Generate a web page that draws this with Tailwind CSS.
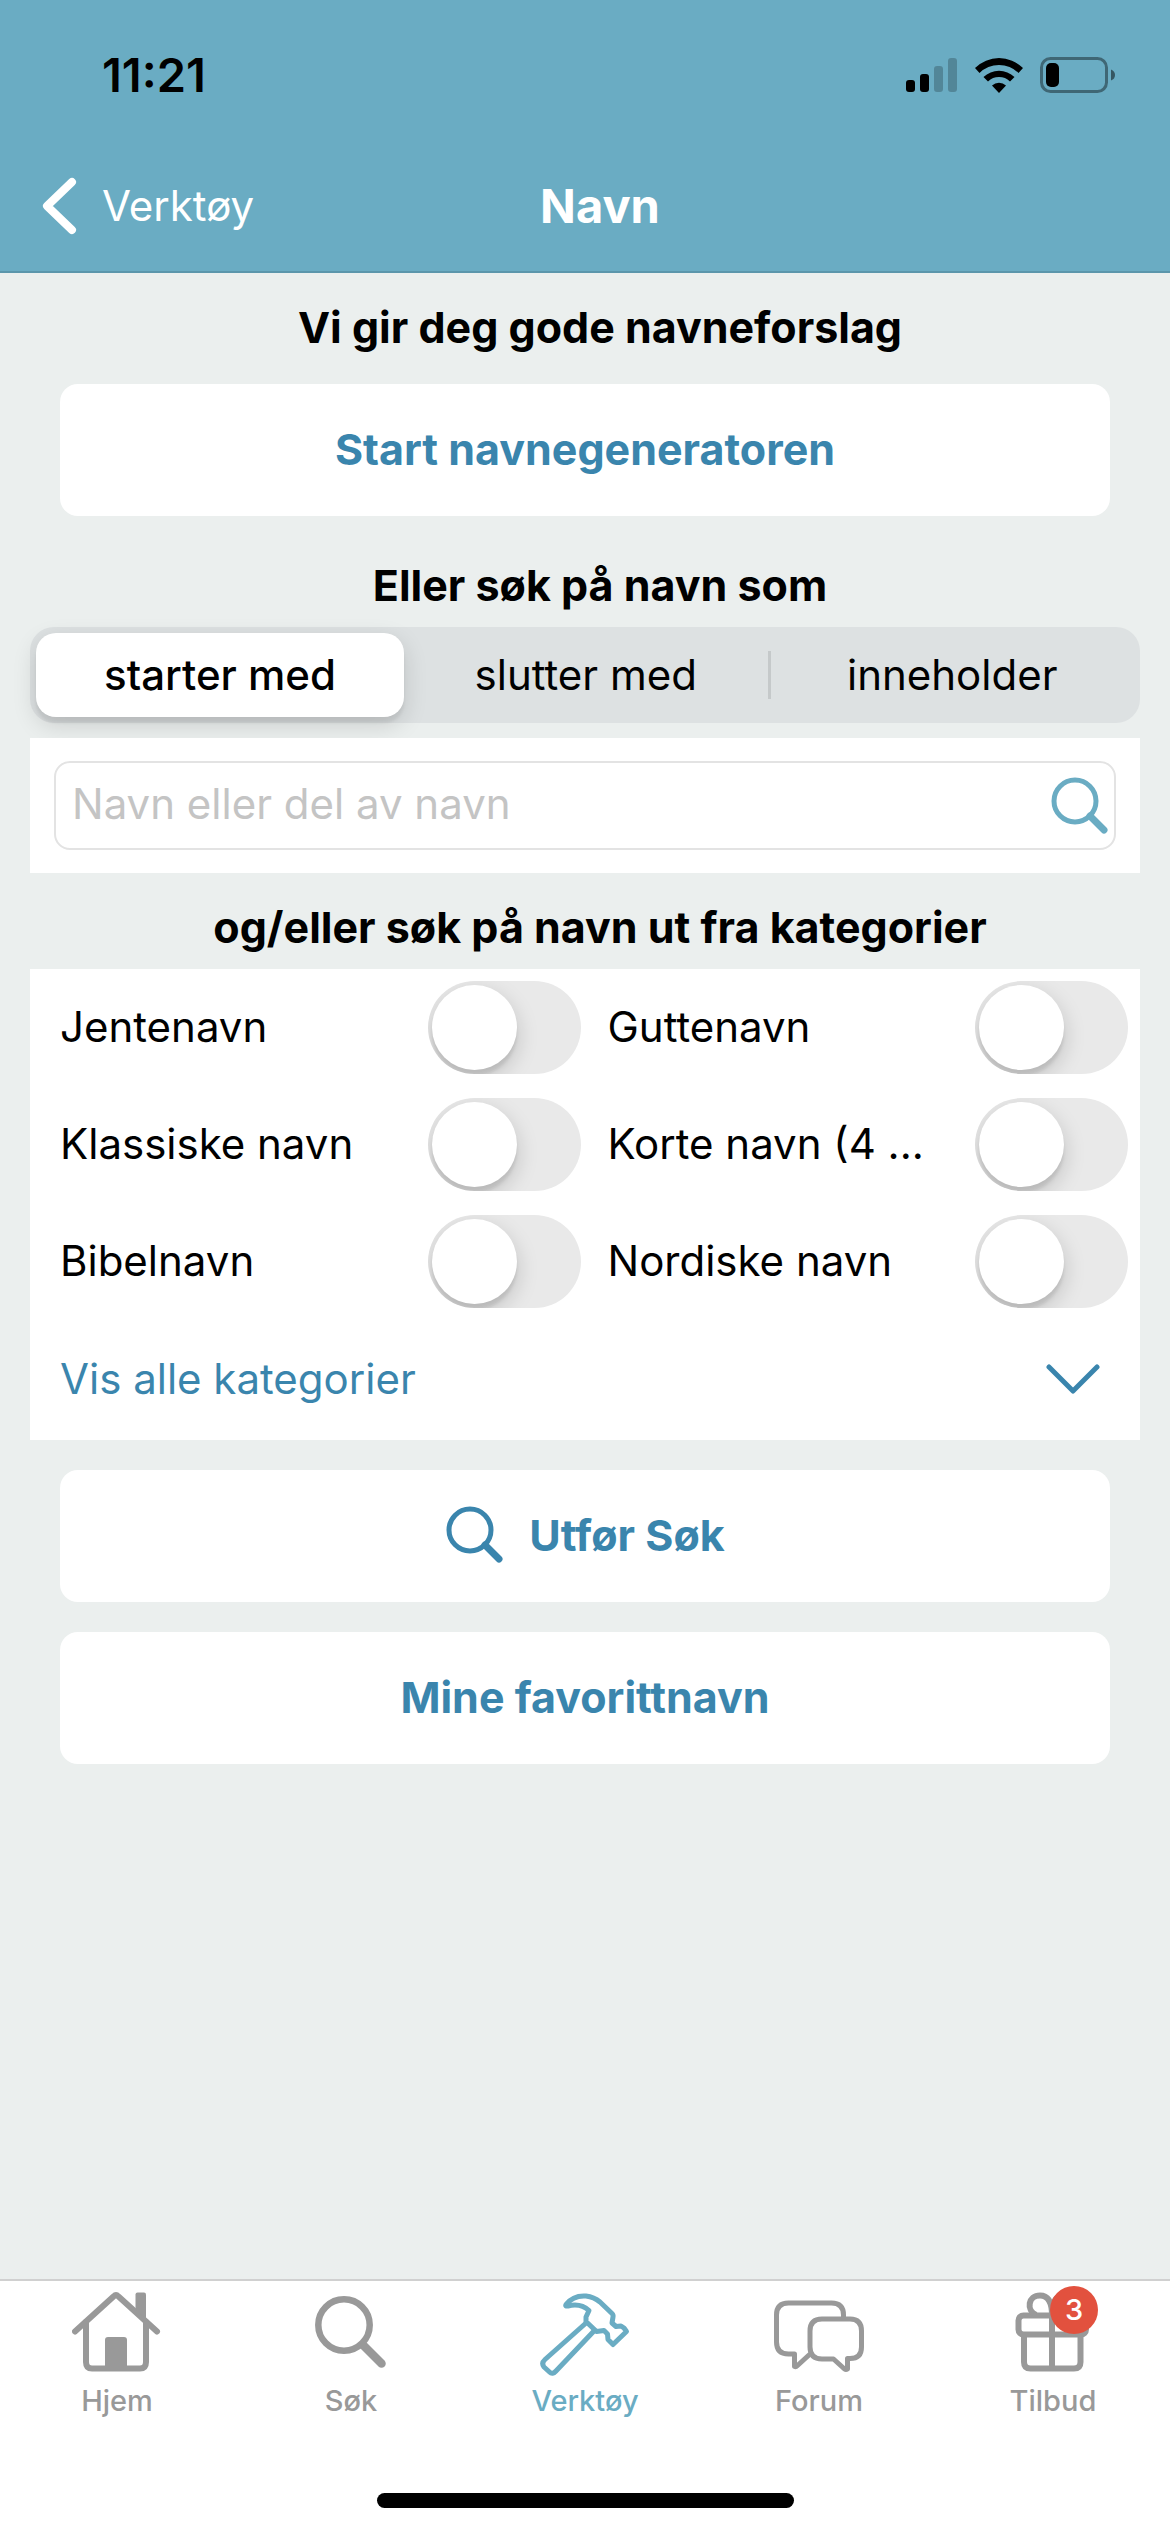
<!DOCTYPE html>
<html lang="nb">
<head>
    <meta charset="UTF-8">
    <meta name="viewport" content="width=device-width, initial-scale=1.0">
    <title>Navn</title>
    <script src="https://cdn.jsdelivr.net/npm/@tailwindcss/browser@4"></script>
</head>
<body class="min-h-screen flex flex-col bg-[#ebefee] text-black font-['Inter',sans-serif] text-[42px] leading-[52px]">

    <header class="bg-[#6aacc3] border-b-2 border-[#5b96ab] text-white">
        <!-- Status bar -->
        <div class="h-[141px] flex items-center justify-between pt-2 pl-[102px] pr-[54px] text-black">
            <span class="text-[47px] font-semibold">11:21</span>
            <div class="flex items-center gap-4">
                <svg class="w-[52px] h-9" viewBox="0 0 52 36">
                    <rect x="0" y="23" width="9" height="12" rx="3"/>
                    <rect x="14" y="17" width="9" height="18" rx="3"/>
                    <rect x="28" y="9" width="9" height="26" rx="3" opacity=".22"/>
                    <rect x="42" y="1" width="9" height="34" rx="3" opacity=".22"/>
                </svg>
                <svg class="w-[50px] h-9" viewBox="0 0 50 36">
                    <path d="M1 11A34 34 0 0 1 49 11L44.500 16A27.500 27.500 0 0 0 5.500 16Z"/>
                    <path d="M9.500 20A22.500 22.500 0 0 1 40.500 20L36 24.500A16 16 0 0 0 14 24.500Z"/>
                    <path d="M18 28.500A10.500 10.500 0 0 1 32 28.500L25 36Z"/>
                </svg>
                <svg class="w-[76px] h-9" viewBox="0 0 76 36">
                    <rect x="1.500" y="1.500" width="65" height="33" rx="9" fill="none" stroke="#000" stroke-width="3" opacity=".4"/>
                    <path d="M71 12.500Q75 14 75 18T71 23.500Z" opacity=".5"/>
                    <rect x="6" y="6" width="13" height="24" rx="5"/>
                </svg>
            </div>
        </div>
        <!-- Title bar -->
        <div class="h-[130px] grid grid-cols-3 items-center px-10">
            <a href="#" class="flex items-center gap-6">
                <svg class="w-[38px] h-[60px]" viewBox="0 0 38 60" fill="none" stroke="currentColor" stroke-width="8" stroke-linecap="round" stroke-linejoin="round"><path d="M32 6L7 30L32 54"/></svg>
                Verktøy
            </a>
            <h1 class="pl-[30px] text-center text-[47px] font-bold">Navn</h1>
        </div>
    </header>

    <main class="flex-1 px-[30px] pt-7">
        <h2 class="pl-[30px] text-center text-[43px] font-bold">Vi gir deg gode navneforslag</h2>
        <div class="px-[30px] pt-[31px]">
            <button type="button" class="w-full h-[132px] pb-[2px] bg-white rounded-[18px] text-[#3a85ad] text-[43px] font-bold">Start navnegeneratoren</button>
        </div>

        <h2 class="pl-[30px] pt-[43px] pb-4 text-center text-[43px] font-bold">Eller søk på navn som</h2>
        <div class="h-24 p-[6px] flex items-center bg-[#dde1e2] rounded-[24px]">
            <button type="button" class="h-full w-[368px] bg-white rounded-[20px] font-medium shadow-[0_8px_24px_rgba(0,0,0,0.14),0_6px_3px_rgba(0,0,0,0.06)]">starter med</button>
            <button type="button" class="h-full flex-1">slutter med</button>
            <span class="w-[3px] h-12 bg-[#c5c9ca]"></span>
            <button type="button" class="h-full flex-1">inneholder</button>
        </div>

        <form class="relative mt-[15px] h-[135px] px-6 flex items-center bg-white">
            <input type="text" aria-label="Navn" placeholder="Navn eller del av navn" class="w-full h-[89px] pl-4 pr-20 pb-1 border-2 border-[#e3e3e3] rounded-2xl placeholder:text-[#c4c4c4] focus:outline-none">
            <button type="submit" aria-label="Søk" class="absolute right-[30px] top-[38px] text-[#6aacc3]">
                <svg class="w-[60px] h-[60px]" viewBox="0 0 60 60" fill="none" stroke="currentColor" stroke-linecap="round"><circle cx="25" cy="25" r="21" stroke-width="5"/><path d="M40 40L54 54" stroke-width="7"/></svg>
            </button>
        </form>

        <h2 class="pl-[30px] pt-7 pb-4 text-center text-[43px] font-bold">og/eller søk på navn ut fra kategorier</h2>
        <section class="bg-white">
            <div id="categories" class="grid grid-cols-2 gap-x-[27px] pl-[30px] pr-3"></div>
            <button type="button" class="w-full h-[120px] pl-[30px] pr-10 flex items-center justify-between text-[#3a85ad]">
                <span class="pb-[2px]">Vis alle kategorier</span>
                <svg class="w-[54px] h-8" viewBox="0 0 54 32" fill="none" stroke="currentColor" stroke-width="5" stroke-linecap="round" stroke-linejoin="round"><path d="M3 3L27 27L51 3"/></svg>
            </button>
        </section>

        <div class="px-[30px] pt-[30px] grid gap-[30px] text-[#3a85ad] text-[43px] font-bold">
            <button type="button" class="h-[132px] pb-[2px] bg-white rounded-[18px] flex items-center justify-center gap-6">
                <svg class="w-[60px] h-[60px]" viewBox="0 0 60 60" fill="none" stroke="currentColor" stroke-linecap="round"><circle cx="25" cy="25" r="21" stroke-width="5"/><path d="M40 40L54 54" stroke-width="7"/></svg>
                Utfør Søk
            </button>
            <button type="button" class="h-[132px] pb-[2px] bg-white rounded-[18px]">Mine favorittnavn</button>
        </div>
    </main>

    <!-- Tab bar -->
    <footer class="bg-white border-t-2 border-[#d0d0d0]">
        <nav class="h-[212px] grid grid-cols-5 text-[29px] leading-9 font-medium text-[#999]">
            <a href="#" class="pt-2 flex flex-col items-center">
                <svg class="w-[90px] h-[94px]" viewBox="0 0 90 94" fill="none" stroke="currentColor" stroke-width="6" stroke-linecap="round" stroke-linejoin="round"><path d="M3 42.500L41.500 7.500Q44 5 46.500 7.500L85 42.500"/><path d="M14 33V73Q14 79.500 20 79.500H68Q74 79.500 74 73V33"/><path d="M63.500 20V5.500Q63.500 3.500 65.500 3.500H72Q74 3.500 74 5.500V30Z" fill="currentColor" stroke="none"/><path d="M33 51Q33 48 36 48H52Q55 48 55 51V79H33Z" fill="currentColor" stroke="none"/></svg>
                Hjem
            </a>
            <a href="#" class="pt-2 flex flex-col items-center">
                <svg class="w-[90px] h-[94px]" viewBox="0 0 90 94" fill="none" stroke="currentColor" stroke-linecap="round"><circle cx="38" cy="36" r="25.700" stroke-width="6.500"/><path d="M57.500 56.500L75.500 74.500" stroke-width="8.500"/></svg>
                Søk
            </a>
            <a href="#" class="pt-2 flex flex-col items-center text-[#6aacc3]">
                <svg class="w-[90px] h-[94px]" viewBox="0 0 90 94" fill="none" stroke="currentColor" stroke-width="5" stroke-linecap="round" stroke-linejoin="round"><path d="M26 15.500C31 9 39 6.500 46 7Q54 8 60 13L72 24.500Q73.500 26 73 28L72 34L76 37.500L81 37L84 39L86.500 42.500L73 55.500L68 50.500L67.500 45L64 41.500L56.500 42.500L46 32.500V28L49 21.500C43 16 36 15 28 17Q25 17.500 26 15.500Z"/><path d="M46 34L5 70.500Q1 74 4 78L9.500 83Q12.500 86 16 82L53.500 42.500"/></svg>
                Verktøy
            </a>
            <a href="#" class="pt-2 flex flex-col items-center">
                <svg class="w-[90px] h-[94px]" viewBox="0 0 90 94" fill="none" stroke="currentColor" stroke-width="5" stroke-linecap="round" stroke-linejoin="round"><path d="M69.500 28V26Q69.500 14 57.500 14H14.500Q2.500 14 2.500 26V53Q2.500 65 14.500 65H20.500V77.500Q22 78 23.500 76.500L35 66"/><path d="M48 30H76Q87.500 30 87.500 42V58Q87.500 69.500 76 69.500H73.500V80Q72 81 70.500 80L59.500 70H48Q36 70 36 58V42Q36 30 48 30Z"/></svg>
                Forum
            </a>
            <a href="#" class="pt-2 relative flex flex-col items-center">
                <svg class="w-[90px] h-[94px]" viewBox="0 0 90 94" fill="none" stroke="currentColor" stroke-width="6" stroke-linejoin="round"><rect x="10.500" y="26.500" width="67.500" height="19" rx="5"/><path d="M16 45V73Q16 79.500 22.500 79.500H66Q72.500 79.500 72.500 73V45M44 26V79"/><path d="M28 26C18 21 20 6.500 32 6.500C40 6.500 44 13 44 26C44 13 48 6.500 56 6.500C68 6.500 70 21 60 26"/></svg>
                Tilbud
                <span class="absolute top-[5px] left-1/2 -translate-x-[3px] w-12 h-12 rounded-full bg-[#e2513e] text-white text-center leading-[48px]">3</span>
            </a>
        </nav>
        <div class="mx-auto mb-6 w-[417px] h-[15px] rounded-full bg-black"></div>
    </footer>

    <script>
        const categories = ["Jentenavn", "Guttenavn", "Klassiske navn", "Korte navn (4 ...", "Bibelnavn", "Nordiske navn"];

        document.getElementById("categories").innerHTML = categories.map(name => `
            <label class="h-[117px] flex items-center justify-between">
                <span class="truncate pb-[2px]">${name}</span>
                <span class="relative w-[153px] h-[93px] shrink-0 overflow-hidden rounded-full bg-[#e9e9e9]">
                    <input type="checkbox" class="peer sr-only">
                    <span class="absolute left-1 top-1 size-[85px] rounded-full bg-white shadow-[0_8px_22px_rgba(0,0,0,0.18),0_6px_3px_rgba(0,0,0,0.08)] peer-checked:left-16"></span>
                </span>
            </label>
        `).join("");
    </script>

</body>
</html>
